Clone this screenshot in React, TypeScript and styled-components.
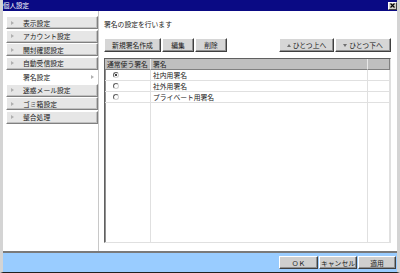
import React from "react";
import styled, { createGlobalStyle } from "styled-components";

const Global = createGlobalStyle`
  html, body { margin: 0; padding: 0; background: #ffffff; }
  body { font-family: "Noto Sans CJK JP", "Liberation Sans", sans-serif; }
  * { box-sizing: border-box; }
`;

const Window = styled.div`
  width: 400px;
  height: 273px;
  display: flex;
  flex-direction: column;
  background: #ffffff;
  border-left: 3px solid #d4d4d4;
  border-right: 3px solid #d4d4d4;
  border-bottom: 1px solid #202020;
  overflow: hidden;
`;

const TitleBar = styled.div`
  height: 11px;
  margin: 0 -3px;
  background: #0a0a84;
  color: #ffffff;
  font-size: 6.5px;
  line-height: 11px;
  padding-left: 3px;
  display: flex;
  align-items: center;
  justify-content: space-between;
  padding-right: 3px;
`;

const CloseBtn = styled.div`
  width: 9px;
  height: 8px;
  background: #d4d0c8;
  border: 1px solid;
  border-color: #ffffff #404040 #404040 #ffffff;
  display: flex;
  align-items: center;
  justify-content: center;
`;

const Main = styled.div`
  flex: 1;
  display: flex;
  min-height: 0;
`;

const Sidebar = styled.div`
  width: 96px;
  border-right: 1px solid #c8c8c8;
  padding: 5px 0 0 3px;
  display: flex;
  flex-direction: column;
  gap: 0.5px;
`;

const NavItem = styled.div<{ $active?: boolean }>`
  height: 13px;
  display: flex;
  align-items: center;
  font-size: 6.8px;
  color: #202020;
  padding-left: ${(p) => (p.$active ? "16px" : "4px")};
  padding-right: 3px;
  background: ${(p) => (p.$active ? "#ffffff" : "#e6e6e6")};
  border: 1px solid;
  border-color: ${(p) =>
    p.$active ? "#ffffff" : "#ffffff #808080 #808080 #ffffff"};
  box-shadow: ${(p) => (p.$active ? "none" : "inset -1px -1px 0 #c0c0c0")};
`;

const Arrow = styled.span`
  width: 0;
  height: 0;
  border-top: 2px solid transparent;
  border-bottom: 2px solid transparent;
  border-left: 3px solid #b0b0b0;
  margin-right: 9px;
`;

const ActiveArrow = styled(Arrow)`
  margin-left: auto;
  margin-right: 0;
`;

const Content = styled.div`
  flex: 1;
  display: flex;
  flex-direction: column;
  padding: 7px 6px 8px 5px;
`;

const Caption = styled.div`
  font-size: 6.8px;
  color: #202020;
  height: 12px;
  line-height: 12px;
`;

const Toolbar = styled.div`
  display: flex;
  margin-top: 8px;
  gap: 1px;
`;

const Btn = styled.button<{ $w: number }>`
  width: ${(p) => p.$w}px;
  height: 14px;
  padding: 0;
  font-family: inherit;
  font-size: 6.8px;
  color: #202020;
  background: #d6d6d6;
  border: 1px solid;
  border-color: #ffffff #404040 #404040 #ffffff;
  box-shadow: inset -1px -1px 0 #909090;
  display: flex;
  align-items: center;
  justify-content: center;
  gap: 2px;
`;

const Spacer = styled.div`
  flex: 1;
`;

const Tri = styled.span<{ $down?: boolean }>`
  width: 0;
  height: 0;
  border-left: 2.5px solid transparent;
  border-right: 2.5px solid transparent;
  ${(p) =>
    p.$down
      ? "border-top: 3px solid #707070;"
      : "border-bottom: 3px solid #707070;"}
`;

const Table = styled.div`
  margin-top: 6px;
  flex: 1;
  border: 1px solid;
  border-color: #606060 #e0e0e0 #e0e0e0 #606060;
  box-shadow: inset 1px 1px 0 #909090;
  display: grid;
  grid-template-columns: 46px 1fr 22px;
  grid-template-rows: 11px repeat(3, 11px) 1fr;
  background: #ffffff;
`;

const Head = styled.div<{ $last?: boolean }>`
  background: #bfbfbf;
  font-size: 6.8px;
  color: #202020;
  padding-left: 2px;
  line-height: 11px;
  border-right: 1px solid ${(p) => (p.$last ? "#808080" : "#e8e8e8")};
  border-bottom: 1px solid #808080;
  white-space: nowrap;
  overflow: hidden;
`;

const Cell = styled.div<{ $center?: boolean; $fill?: boolean }>`
  font-size: 6.8px;
  color: #202020;
  line-height: 10px;
  padding-left: ${(p) => (p.$center ? "8px" : "2px")};
  border-right: 1px solid #e0e0e0;
  border-bottom: ${(p) => (p.$fill ? "none" : "1px solid #e0e0e0")};
  display: flex;
  align-items: center;
`;

const Radio = styled.span<{ $on?: boolean }>`
  width: 6px;
  height: 6px;
  border-radius: 50%;
  border: 1px solid #606060;
  border-right-color: #d0d0d0;
  border-bottom-color: #d0d0d0;
  background: #ffffff;
  display: flex;
  align-items: center;
  justify-content: center;
  &::after {
    content: "";
    width: 2px;
    height: 2px;
    border-radius: 50%;
    background: ${(p) => (p.$on ? "#000000" : "transparent")};
  }
`;

const Footer = styled.div`
  height: 21px;
  margin: 0 -3px;
  background: #99ccff;
  border-top: 2px solid #7a7a7a;
  display: flex;
  justify-content: flex-end;
  align-items: center;
  padding-right: 4px;
  gap: 1px;
`;

const FootBtn = styled(Btn)`
  height: 13px;
  background: #cfcfcf;
`;

const navItems = [
  "表示設定",
  "アカウント設定",
  "開封確認設定",
  "自動受信設定",
  "署名設定",
  "迷惑メール設定",
  "ゴミ箱設定",
  "整合処理",
];

const rows = [
  { name: "社内用署名", on: true },
  { name: "社外用署名", on: false },
  { name: "プライベート用署名", on: false },
];

export default function App() {
  return (
    <>
      <Global />
      <Window>
        <TitleBar>
          <span>個人設定</span>
          <CloseBtn>
            <svg width="5" height="5" viewBox="0 0 5 5">
              <path d="M0.5 0.5L4.5 4.5M4.5 0.5L0.5 4.5" stroke="#000" strokeWidth="1.2" />
            </svg>
          </CloseBtn>
        </TitleBar>
        <Main>
          <Sidebar>
            {navItems.map((n) =>
              n === "署名設定" ? (
                <NavItem key={n} $active>
                  {n}
                  <ActiveArrow />
                </NavItem>
              ) : (
                <NavItem key={n}>
                  <Arrow />
                  {n}
                </NavItem>
              )
            )}
          </Sidebar>
          <Content>
            <Caption>署名の設定を行います</Caption>
            <Toolbar>
              <Btn $w={57}>新規署名作成</Btn>
              <Btn $w={32}>編集</Btn>
              <Btn $w={32}>削除</Btn>
              <Spacer />
              <Btn $w={55}>
                <Tri />
                ひとつ上へ
              </Btn>
              <Btn $w={56}>
                <Tri $down />
                ひとつ下へ
              </Btn>
            </Toolbar>
            <Table>
              <Head>通常使う署名</Head>
              <Head>署名</Head>
              <Head $last></Head>
              {rows.map((r) => (
                <React.Fragment key={r.name}>
                  <Cell $center>
                    <Radio $on={r.on} />
                  </Cell>
                  <Cell>{r.name}</Cell>
                  <Cell></Cell>
                </React.Fragment>
              ))}
              <Cell $fill></Cell>
              <Cell $fill></Cell>
              <Cell $fill></Cell>
            </Table>
          </Content>
        </Main>
        <Footer>
          <FootBtn $w={39}>ＯＫ</FootBtn>
          <FootBtn $w={38}>キャンセル</FootBtn>
          <FootBtn $w={38}>適用</FootBtn>
        </Footer>
      </Window>
    </>
  );
}
